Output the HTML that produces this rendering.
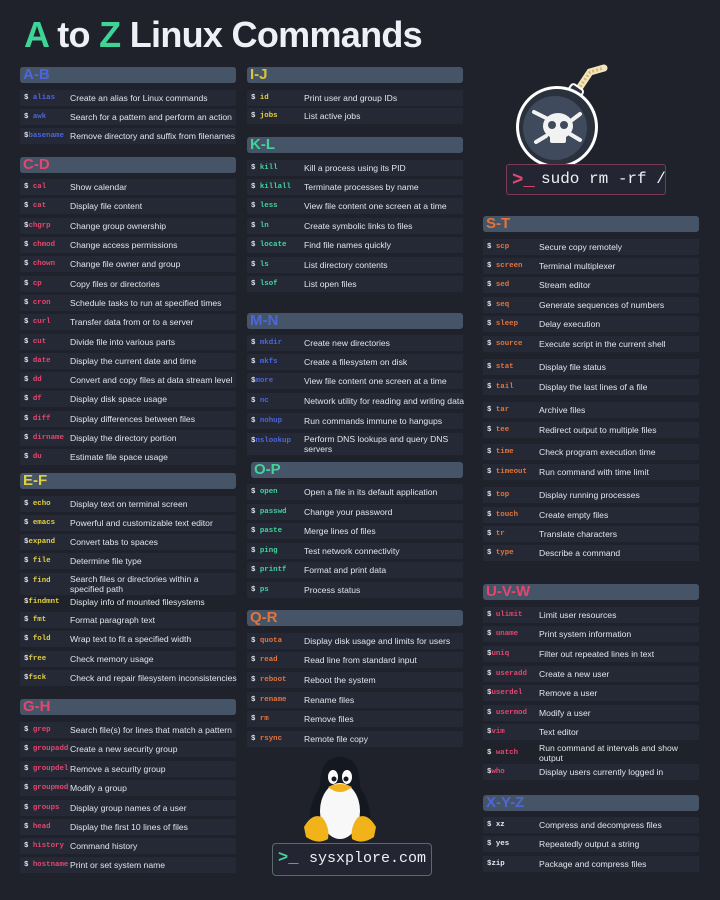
<!DOCTYPE html>
<html><head><meta charset="utf-8"><style>
*{margin:0;padding:0;box-sizing:border-box}
body{width:720px;height:900px;background:#1f222b;position:relative;overflow:hidden;font-family:"Liberation Sans",sans-serif;color:#e6e8ee}
.t{position:absolute;left:24px;top:14px;font-size:36px;font-weight:bold;color:#eef0f6;letter-spacing:-0.7px}
.t em{font-style:normal;color:#3ed496}
.c{position:absolute;width:216px}
.h{position:absolute;left:0;width:216px;height:16px;background:#465468;border-radius:3px;font-weight:bold;font-size:15px;line-height:16px;padding-left:3px}
.r{position:absolute;left:0;width:216px;height:16px;background:#252935;font-size:8.6px;line-height:16px;color:#e3e5ec}
.r b{position:absolute;left:4px;font-family:"Liberation Mono",monospace;font-size:7.4px;color:#dfe2e8}
.r span{position:absolute;left:50px;white-space:nowrap}
.r.two{height:22px}
.r.two span{line-height:10px;top:1px;white-space:normal;width:150px}
.blue i{color:#4d66dc;font-style:normal}.pink i{color:#e4466e;font-style:normal}.yel i{color:#e2cf40;font-style:normal}.grn i{color:#42d39c;font-style:normal}.org i{color:#e3743a;font-style:normal}.wht i{color:#e6e8ee;font-style:normal}
.c2 .r span{left:57px}.c3 .r span{left:56px}
</style></head><body>
<div class="t"><em>A</em> to <em>Z</em> Linux Commands</div>

<div class="c" style="left:20px;top:0">
<div class="h" style="top:67px;color:#4d66dc">A-B</div>
<div class="blue">
<div class="r" style="top:90px"><b>$ <i>alias</i></b><span>Create an alias for Linux commands</span></div>
<div class="r" style="top:109px"><b>$ <i>awk</i></b><span>Search for a pattern and perform an action</span></div>
<div class="r" style="top:128px"><b>$<i>basename</i></b><span>Remove directory and suffix from filenames</span></div>
</div>
<div class="h" style="top:157px;color:#e4466e">C-D</div>
<div class="pink">
<div class="r" style="top:179px"><b>$ <i>cal</i></b><span>Show calendar</span></div>
<div class="r" style="top:198px"><b>$ <i>cat</i></b><span>Display file content</span></div>
<div class="r" style="top:218px"><b>$<i>chgrp</i></b><span> Change group ownership</span></div>
<div class="r" style="top:237px"><b>$ <i>chmod</i></b><span>Change access permissions</span></div>
<div class="r" style="top:256px"><b>$ <i>chown</i></b><span>Change file owner and group</span></div>
<div class="r" style="top:276px"><b>$ <i>cp</i></b><span>Copy files or directories</span></div>
<div class="r" style="top:295px"><b>$ <i>cron</i></b><span>Schedule tasks to run at specified times</span></div>
<div class="r" style="top:314px"><b>$ <i>curl</i></b><span>Transfer data from or to a server</span></div>
<div class="r" style="top:334px"><b>$ <i>cut</i></b><span>Divide file into various parts</span></div>
<div class="r" style="top:353px"><b>$ <i>date</i></b><span>Display the current date and time</span></div>
<div class="r" style="top:372px"><b>$ <i>dd</i></b><span>Convert and copy files at data stream level</span></div>
<div class="r" style="top:391px"><b>$ <i>df</i></b><span>Display disk space usage</span></div>
<div class="r" style="top:411px"><b>$ <i>diff</i></b><span>Display differences between files</span></div>
<div class="r" style="top:430px"><b>$ <i>dirname</i></b><span>Display the directory portion</span></div>
<div class="r" style="top:449px"><b>$ <i>du</i></b><span>Estimate file space usage</span></div>
</div>
<div class="h" style="top:473px;color:#e2cf40">E-F</div>
<div class="yel">
<div class="r" style="top:496px"><b>$ <i>echo</i></b><span>Display text on terminal screen</span></div>
<div class="r" style="top:515px"><b>$ <i>emacs</i></b><span>Powerful and customizable text editor</span></div>
<div class="r" style="top:534px"><b>$<i>expand</i></b><span>Convert tabs to spaces</span></div>
<div class="r" style="top:553px"><b>$ <i>file</i></b><span>Determine file type</span></div>
<div class="r two" style="top:573px"><b>$ <i>find</i></b><span style="width:140px">Search files or directories within a specified path</span></div>
<div class="r" style="top:594px;background:none"><b>$<i>findmnt</i></b><span>Display info of mounted filesystems</span></div>
<div class="r" style="top:612px"><b>$ <i>fmt</i></b><span>Format paragraph text</span></div>
<div class="r" style="top:631px"><b>$ <i>fold</i></b><span>Wrap text to fit a specified width</span></div>
<div class="r" style="top:651px"><b>$<i>free</i></b><span>Check memory usage</span></div>
<div class="r" style="top:670px"><b>$<i>fsck</i></b><span>Check and repair filesystem inconsistencies</span></div>
</div>
<div class="h" style="top:699px;color:#e4466e">G-H</div>
<div class="pink">
<div class="r" style="top:722px"><b>$ <i>grep</i></b><span>Search file(s) for lines that match a pattern</span></div>
<div class="r" style="top:741px"><b>$ <i>groupadd</i></b><span>Create a new security group</span></div>
<div class="r" style="top:761px"><b>$ <i>groupdel</i></b><span>  Remove a security group</span></div>
<div class="r" style="top:780px"><b>$ <i>groupmod</i></b><span>Modify a group</span></div>
<div class="r" style="top:800px"><b>$ <i>groups</i></b><span>Display group names of a user</span></div>
<div class="r" style="top:819px"><b>$ <i>head</i></b><span>Display the first 10 lines of files</span></div>
<div class="r" style="top:838px"><b>$ <i>history</i></b><span>Command history</span></div>
<div class="r" style="top:857px"><b>$ <i>hostname</i></b><span>Print or set system name</span></div>
</div>
</div>

<div class="c c2" style="left:247px;top:0">
<div class="h" style="top:67px;color:#d8c53a">I-J</div>
<div class="yel">
<div class="r" style="top:90px"><b>$ <i>id</i></b><span>Print user and group IDs</span></div>
<div class="r" style="top:108px"><b>$ <i>jobs</i></b><span>List active jobs</span></div>
</div>
<div class="h" style="top:137px;color:#42d39c">K-L</div>
<div class="grn">
<div class="r" style="top:160px"><b>$ <i>kill</i></b><span>Kill a process using its PID</span></div>
<div class="r" style="top:179px"><b>$ <i>killall</i></b><span>Terminate processes by name</span></div>
<div class="r" style="top:198px"><b>$ <i>less</i></b><span> View file content one screen at a time</span></div>
<div class="r" style="top:218px"><b>$ <i>ln</i></b><span>Create symbolic links to files</span></div>
<div class="r" style="top:237px"><b>$ <i>locate</i></b><span>Find file names quickly</span></div>
<div class="r" style="top:257px"><b>$ <i>ls</i></b><span>List directory contents</span></div>
<div class="r" style="top:276px"><b>$ <i>lsof</i></b><span>List open files</span></div>
</div>
<div class="h" style="top:313px;color:#4d66dc">M-N</div>
<div class="blue">
<div class="r" style="top:335px"><b>$ <i>mkdir</i></b><span>Create new directories</span></div>
<div class="r" style="top:354px"><b>$ <i>mkfs</i></b><span>Create a filesystem on disk</span></div>
<div class="r" style="top:373px"><b>$<i>more</i></b><span>View file content one screen at a time</span></div>
<div class="r" style="top:393px"><b>$ <i>nc</i></b><span>Network utility for reading and writing data</span></div>
<div class="r" style="top:413px"><b>$ <i>nohup</i></b><span>Run commands immune to hangups</span></div>
<div class="r two" style="top:433px"><b>$<i>nslookup</i></b><span>Perform DNS lookups and query DNS servers</span></div>
</div>
<div class="h" style="top:462px;color:#42d39c;left:4px;width:212px">O-P</div>
<div class="grn">
<div class="r" style="top:484px"><b>$ <i>open</i></b><span>Open a file in its default application</span></div>
<div class="r" style="top:504px"><b>$ <i>passwd</i></b><span>Change your password</span></div>
<div class="r" style="top:523px"><b>$ <i>paste</i></b><span>Merge lines of files</span></div>
<div class="r" style="top:543px"><b>$ <i>ping</i></b><span>Test network connectivity</span></div>
<div class="r" style="top:562px"><b>$ <i>printf</i></b><span>Format and print data</span></div>
<div class="r" style="top:582px"><b>$ <i>ps</i></b><span>Process status</span></div>
</div>
<div class="h" style="top:610px;color:#e3743a">Q-R</div>
<div class="org">
<div class="r" style="top:633px"><b>$ <i>quota</i></b><span>Display disk usage and limits for users</span></div>
<div class="r" style="top:652px"><b>$ <i>read</i></b><span>Read line from standard input</span></div>
<div class="r" style="top:672px"><b>$ <i>reboot</i></b><span>Reboot the system</span></div>
<div class="r" style="top:692px"><b>$ <i>rename</i></b><span>Rename files</span></div>
<div class="r" style="top:711px"><b>$ <i>rm</i></b><span>Remove files</span></div>
<div class="r" style="top:731px"><b>$ <i>rsync</i></b><span>Remote file copy</span></div>
</div>
</div>

<div class="c c3" style="left:483px;top:0">
<div class="h" style="top:216px;color:#e3743a">S-T</div>
<div class="org">
<div class="r" style="top:239px"><b>$ <i>scp</i></b><span>Secure copy remotely</span></div>
<div class="r" style="top:258px"><b>$ <i>screen</i></b><span>Terminal multiplexer</span></div>
<div class="r" style="top:277px"><b>$ <i>sed</i></b><span> Stream editor</span></div>
<div class="r" style="top:297px"><b>$ <i>seq</i></b><span>Generate sequences of numbers</span></div>
<div class="r" style="top:316px"><b>$ <i>sleep</i></b><span>Delay execution</span></div>
<div class="r" style="top:336px"><b>$ <i>source</i></b><span>Execute script in the current shell</span></div>
<div class="r" style="top:359px"><b>$ <i>stat</i></b><span>Display file status</span></div>
<div class="r" style="top:379px"><b>$ <i>tail</i></b><span>Display the last lines of a file</span></div>
<div class="r" style="top:402px"><b>$ <i>tar</i></b><span>Archive files</span></div>
<div class="r" style="top:422px"><b>$ <i>tee</i></b><span>Redirect output to multiple files</span></div>
<div class="r" style="top:444px"><b>$ <i>time</i></b><span>Check program execution time</span></div>
<div class="r" style="top:464px"><b>$ <i>timeout</i></b><span>Run command with time limit</span></div>
<div class="r" style="top:487px"><b>$ <i>top</i></b><span>Display running processes</span></div>
<div class="r" style="top:507px"><b>$ <i>touch</i></b><span>Create empty files</span></div>
<div class="r" style="top:526px"><b>$ <i>tr</i></b><span>Translate characters</span></div>
<div class="r" style="top:545px"><b>$ <i>type</i></b><span>Describe a command</span></div>
</div>
<div class="h" style="top:584px;color:#e4466e">U-V-W</div>
<div class="pink">
<div class="r" style="top:607px"><b>$ <i>ulimit</i></b><span>Limit user resources</span></div>
<div class="r" style="top:626px"><b>$ <i>uname</i></b><span> Print system information</span></div>
<div class="r" style="top:646px"><b>$<i>uniq</i></b><span>Filter out repeated lines in text</span></div>
<div class="r" style="top:666px"><b>$ <i>useradd</i></b><span>Create a new user</span></div>
<div class="r" style="top:685px"><b>$<i>userdel</i></b><span>Remove a user</span></div>
<div class="r" style="top:705px"><b>$ <i>usermod</i></b><span>Modify a user</span></div>
<div class="r" style="top:724px"><b>$<i>vim</i></b><span> Text editor</span></div>
<div class="r two" style="top:742px;background:none"><b style="top:3px">$ <i>watch</i></b><span> Run command at intervals and show output</span></div>
<div class="r" style="top:764px"><b>$<i>who</i></b><span>Display users currently logged in</span></div>
</div>
<div class="h" style="top:795px;color:#4d66dc">X-Y-Z</div>
<div class="wht">
<div class="r" style="top:817px"><b>$ <i>xz</i></b><span>Compress and decompress files</span></div>
<div class="r" style="top:836px"><b>$ <i>yes</i></b><span>Repeatedly output a string</span></div>
<div class="r" style="top:856px"><b>$<i>zip</i></b><span>Package and compress files</span></div>
</div>
</div>

<!-- bomb -->
<svg style="position:absolute;left:500px;top:60px" width="150" height="110" viewBox="0 0 150 110">
<path d="M78 30 L90 12 L104 8" stroke="#f2e6c0" stroke-width="7" fill="none" stroke-linecap="round"/>
<path d="M78 30 L90 12 L104 8" stroke="#d9b96a" stroke-width="3" fill="none" stroke-dasharray="2 2"/>
<rect x="68" y="26" width="14" height="12" rx="3" transform="rotate(35 75 32)" fill="#2a3140" stroke="#fff" stroke-width="2"/>
<circle cx="57" cy="67" r="41" fill="#fff"/>
<circle cx="57" cy="67" r="38" fill="#2a303c"/>
<circle cx="55" cy="68" r="32" fill="#3f4a5c"/>
<ellipse cx="58" cy="66" rx="15" ry="13" fill="#f2f2f2"/>
<rect x="50" y="74" width="16" height="9" rx="2" fill="#f2f2f2"/>
<circle cx="52" cy="65" r="4" fill="#3f4a5c"/><circle cx="64" cy="65" r="4" fill="#3f4a5c"/>
<path d="M34 52 L46 58 M80 80 L70 74 M80 54 L72 60 M36 82 L46 76" stroke="#f2f2f2" stroke-width="4" stroke-linecap="round"/>
</svg>
<div style="position:absolute;left:506px;top:164px;width:160px;height:31px;border:1.5px solid #7a3a55;border-radius:3px;background:#232632;font-family:'Liberation Mono',monospace;font-size:16px;line-height:28px;color:#eef0f4;padding-left:34px;white-space:nowrap">sudo rm -rf /</div>
<div style="position:absolute;left:512px;top:170px;font-family:'Liberation Mono',monospace;font-size:19px;line-height:20px;font-weight:bold;color:#e4466e">&gt;_</div>

<!-- penguin -->
<svg style="position:absolute;left:300px;top:755px" width="80" height="95" viewBox="0 0 80 95">
<path d="M40 2 C22 2 20 20 20 32 C14 42 6 56 12 72 L68 72 C74 56 66 42 60 32 C60 20 58 2 40 2Z" fill="#141821"/>
<ellipse cx="40" cy="56" rx="20" ry="28" fill="#f8f8f8"/>
<ellipse cx="33" cy="22" rx="5" ry="7" fill="#fff"/><ellipse cx="47" cy="22" rx="5" ry="7" fill="#fff"/>
<circle cx="34" cy="24" r="2.5" fill="#141821"/><circle cx="46" cy="24" r="2.5" fill="#141821"/>
<path d="M28 32 Q40 26 52 32 Q40 42 28 32Z" fill="#f2b21a"/>
<path d="M4 72 Q12 58 22 62 Q30 72 28 84 Q18 90 6 82Z" fill="#f2b21a"/>
<path d="M76 72 Q68 58 58 62 Q50 72 52 84 Q62 90 74 82Z" fill="#f2b21a"/>
</svg>
<div style="position:absolute;left:272px;top:843px;width:160px;height:33px;border:1.5px solid #5a6a6a;border-radius:4px;background:#232632;font-family:'Liberation Mono',monospace;font-size:15px;line-height:30px;color:#eef0f4;padding-left:36px">sysxplore.com</div>
<div style="position:absolute;left:278px;top:849px;font-family:'Liberation Mono',monospace;font-size:17px;line-height:20px;font-weight:bold;color:#42d39c">&gt;_</div>
</body></html>
